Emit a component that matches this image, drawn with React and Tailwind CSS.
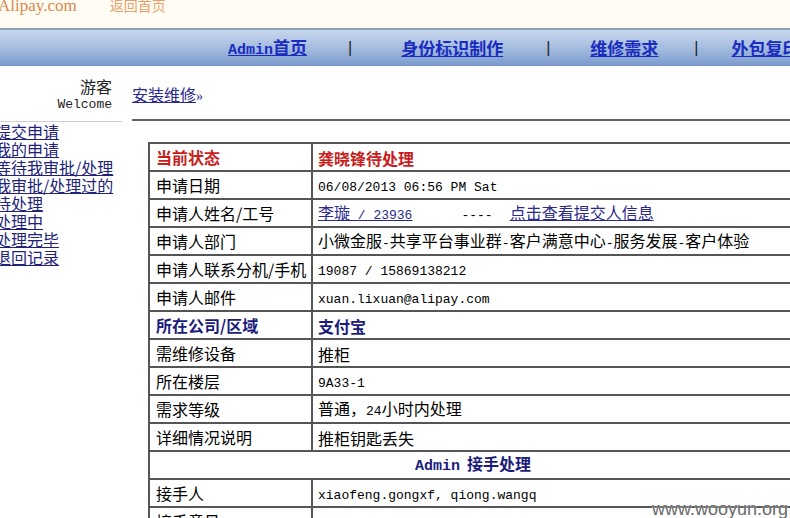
import React from "react";

const CJK = "font-['Noto_Sans_CJK_SC',sans-serif]";
const MONO = "font-['Liberation_Mono','Noto_Sans_CJK_SC',monospace]";

function M({ children, className = "" }) {
  return <span className={`${MONO} text-[13px] ${className}`}>{children}</span>;
}

function Row({ label, children, labelClass = "", valueClass = "" }) {
  return (
    <div className="flex h-[28px] border-b-2 border-[#555]">
      <div className={`w-[163px] shrink-0 border-r-2 border-[#555] pl-[6px] flex items-center text-[16px] leading-[20px] ${CJK} ${labelClass}`}>
        <span>{label}</span>
      </div>
      <div className={`flex-1 pl-[5px] flex items-center text-[16px] leading-[20px] whitespace-nowrap ${CJK} ${valueClass}`}>
        <span className="pt-[1px]">{children}</span>
      </div>
    </div>
  );
}

export default function App() {
  const sideLinks = [
    "提交申请",
    "我的申请",
    "等待我审批/处理",
    "我审批/处理过的",
    "待处理",
    "处理中",
    "处理完毕",
    "退回记录",
  ];
  return (
    <div className="relative w-[790px] h-[518px] overflow-hidden bg-white text-black">
      {/* top strip */}
      <div className="h-[28px] bg-[#fffcf4] flex items-start">
        <span className="font-['Liberation_Serif',serif] text-[17px] leading-[17px] text-[#d98a4c] -mt-[3px] -ml-[2px]">
          Alipay.com
        </span>
        <span className={`${CJK} text-[14px] leading-[14px] text-[#e9a06c] ml-[33px] -mt-[2px]`}>
          返回首页
        </span>
      </div>
      <div className="h-[2px] bg-[#8ea1b6]" />
      {/* nav */}
      <div className="h-[36px] bg-gradient-to-b from-[#c7d6ec] via-[#a5bcdf] to-[#7a9acb] flex items-center pl-[228px] whitespace-nowrap font-bold text-[17px] text-[#1a2cc0]">
        <span className="underline">
          <span className={`${MONO} text-[15px]`}>Admin</span>
          <span className={CJK}>首页</span>
        </span>
        <span className="ml-[41px] font-normal text-[16px] text-[#222] font-['Liberation_Sans',sans-serif]">|</span>
        <span className={`ml-[49px] underline ${CJK}`}>身份标识制作</span>
        <span className="ml-[43px] font-normal text-[16px] text-[#222] font-['Liberation_Sans',sans-serif]">|</span>
        <span className={`ml-[40px] underline ${CJK}`}>维修需求</span>
        <span className="ml-[36px] font-normal text-[16px] text-[#222] font-['Liberation_Sans',sans-serif]">|</span>
        <span className={`ml-[33px] underline ${CJK}`}>外包复印</span>
      </div>

      {/* body */}
      <div className="flex">
        {/* sidebar */}
        <div className="w-[122px] shrink-0">
          <div className="h-[56px] border-b border-[#cfcfcf] flex flex-col items-end pr-[10px] pt-[10px]">
            <span className={`${CJK} text-[16px] leading-[20px] text-[#222]`}>游客</span>
            <span className={`${MONO} text-[13px] leading-[16px] text-[#222] mt-[1px]`}>Welcome</span>
          </div>
          <div className="-ml-[5px] flex flex-col">
            {sideLinks.map((t) => (
              <span key={t} className={`${CJK} text-[16px] leading-[18px] text-[#22227a] underline whitespace-nowrap`}>
                {t}
              </span>
            ))}
          </div>
        </div>

        {/* main */}
        <div className="ml-[10px] flex-1">
          <div className="h-[55px] border-b-2 border-[#666] pt-[17px]">
            <span className={`${CJK} text-[16px] leading-[20px] text-[#2a2a8c] underline`}>安装维修</span>
            <span className="font-['Liberation_Serif',serif] text-[14px] text-[#2a2a8c]">»</span>
          </div>
          <div className="mt-[21px] ml-[16px] w-[650px] border-t-2 border-l-2 border-r-2 border-[#555]">
            <Row label="当前状态" labelClass="font-bold text-[#c81e1e]" valueClass="font-bold text-[#c81e1e]">
              龚晓锋待处理
            </Row>
            <Row label="申请日期">
              <M>06/08/2013 06:56 PM Sat</M>
            </Row>
            <Row label="申请人姓名/工号">
              <span className="underline text-[#2a2a8c]">
                李璇<M> / 23936</M>
              </span>
              <M className="ml-[49px]">----</M>
              <span className="ml-[17px] underline text-[#2a2a8c]">点击查看提交人信息</span>
            </Row>
            <Row label="申请人部门">
              小微金服<M>-</M>共享平台事业群<M>-</M>客户满意中心<M>-</M>服务发展<M>-</M>客户体验
            </Row>
            <Row label="申请人联系分机/手机">
              <M>19087 / 15869138212</M>
            </Row>
            <Row label="申请人邮件">
              <M>xuan.lixuan@alipay.com</M>
            </Row>
            <Row label="所在公司/区域" labelClass="font-bold text-[#1c1c7c]" valueClass="font-bold text-[#1c1c7c]">
              支付宝
            </Row>
            <Row label="需维修设备">推柜</Row>
            <Row label="所在楼层">
              <M>9A33-1</M>
            </Row>
            <Row label="需求等级">
              普通，<M>24</M>小时内处理
            </Row>
            <Row label="详细情况说明">推柜钥匙丢失</Row>
            <div className="flex h-[28px] border-b-2 border-[#555] items-center justify-center font-bold text-[16px] leading-[20px] text-[#1c1c7c] whitespace-nowrap">
              <span>
                <span className={`${MONO} text-[15px]`}>Admin</span>
                <span className={`${CJK} ml-[7px]`}>接手处理</span>
              </span>
            </div>
            <Row label="接手人">
              <M>xiaofeng.gongxf, qiong.wangq</M>
            </Row>
            <Row label="接手意见"></Row>
          </div>
        </div>
      </div>

      {/* watermark */}
      <div className="absolute right-[2px] bottom-[-1px] font-['Liberation_Sans',sans-serif] text-[18px] leading-[20px] text-[#6a6a6a] [text-shadow:0_0_2px_#fff]">
        www.wooyun.org
      </div>
    </div>
  );
}
